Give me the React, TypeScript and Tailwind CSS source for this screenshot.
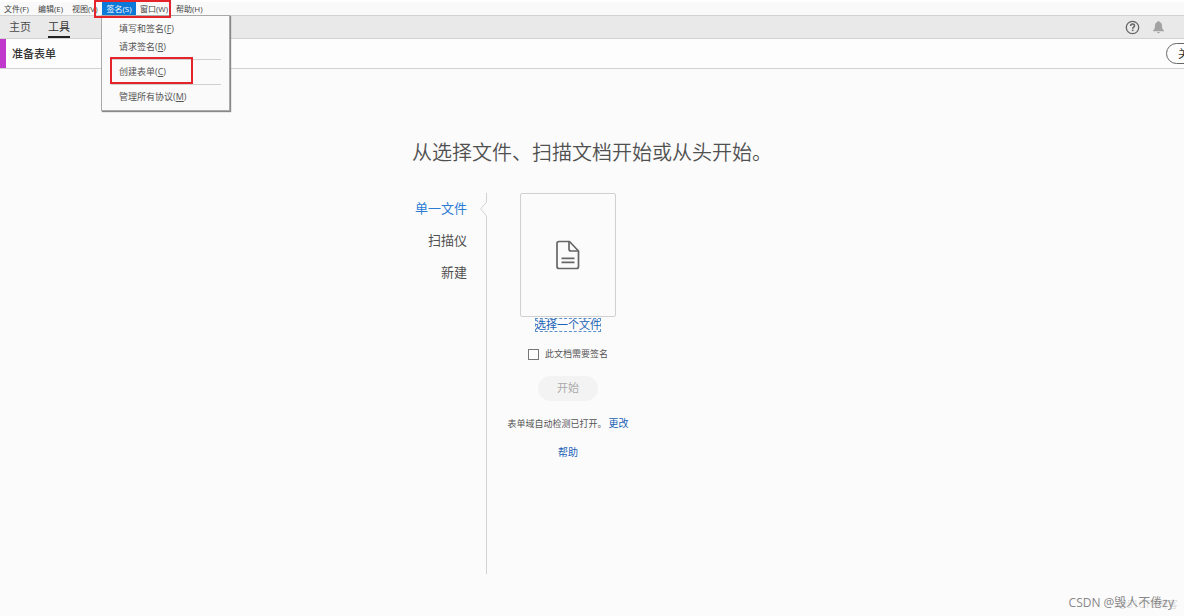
import { useState } from "react"

const menus = [
  { label: "文件", hotkey: "F" },
  { label: "编辑", hotkey: "E" },
  { label: "视图", hotkey: "V" },
  { label: "签名", hotkey: "S" },
  { label: "窗口", hotkey: "W" },
  { label: "帮助", hotkey: "H" },
]

const signItems = [
  [
    { label: "填写和签名", hotkey: "F" },
    { label: "请求签名", hotkey: "R" },
  ],
  [{ label: "创建表单", hotkey: "C" }],
  [{ label: "管理所有协议", hotkey: "M" }],
]

const sources = ["单一文件", "扫描仪", "新建"]

function MenuBar() {
  return (
    <nav className="relative flex h-[15px] items-end bg-[#f9f9f9] border-t-2 border-white text-[8px] leading-[12px] text-[#444]">
      {menus.map((menu) => (
        <button
          key={menu.label}
          className={`h-[13px] shrink-0 px-1 whitespace-nowrap ${
            menu.label === "签名" ? "w-[34px] bg-[#0c78d7] text-white" : "w-[34px] text-left"
          } ${menu.label === "窗口" ? "mr-[2px]" : ""}`}
        >
          {menu.label}({menu.hotkey})
        </button>
      ))}
      {/* Highlight around the open menu */}
      <div className="absolute -top-0.5 left-[94px] z-30 h-[18px] w-[77px] border-2 border-[#e5232b] pointer-events-none" />
      <SignMenu />
    </nav>
  )
}

function SignMenu() {
  return (
    <div className="absolute top-[13px] left-[101px] z-20 w-[129px] border border-[#aaa] bg-[#fafafa] py-1 pr-2 pl-[9px] shadow-[1px_1px_1px_#888]">
      {signItems.map((group, index) => (
        <div key={index} className={index > 0 ? "mt-[3px] border-t border-[#d0d0d0] pt-[3px]" : ""}>
          {group.map((item) => (
            <button
              key={item.label}
              className="block h-[18px] w-full pl-2 text-left text-[9px] leading-[18px] whitespace-nowrap text-[#555]"
            >
              {item.label}(<u className="underline-offset-1">{item.hotkey}</u>)
            </button>
          ))}
        </div>
      ))}
      {/* Highlight around the form entry */}
      <div className="absolute top-[41px] left-2 h-[27px] w-[83px] border-2 border-[#e5232b] pointer-events-none" />
    </div>
  )
}

function TabBar() {
  return (
    <div className="flex h-6 items-stretch border-y border-[#d2d2d2] bg-[#e9e9e9] pl-[9px] text-[11px] text-[#4b4b4b]">
      <button className="mr-[17px]">主页</button>
      <button className="border-b-2 border-[#222] pt-[2px] text-[#333]">工具</button>
      <div className="ml-auto flex items-center gap-3 pr-[19px]">
        <button aria-label="帮助">
          <svg width="15" height="15" viewBox="0 0 15 15" fill="none" stroke="#666">
            <circle cx="7.5" cy="7.5" r="6.2" strokeWidth="1.3" />
            <path d="M5.7 6c0-1.200.8-1.900 1.900-1.900s1.900.7 1.900 1.700c0 1.300-1.800 1.400-1.800 2.900" strokeWidth="1.5" />
            <path d="M7.7 9.600v1.500" strokeWidth="1.6" />
          </svg>
        </button>
        <button aria-label="通知">
          <svg width="13" height="14" viewBox="0 0 13 14" fill="#a3a3a3">
            <path d="M6.5 1c.6 0 1 .4 1 1 1.7.5 2.5 1.8 2.5 3.5 0 2.7.5 3.7 1.9 4.8v.9H1.1v-.9C2.5 9.200 3 8.200 3 5.500 3 3.800 3.800 2.500 5.500 2c0-.6.4-1 1-1z" />
            <path d="M5.100 12h2.800c-.2.8-.7 1.200-1.400 1.200S5.300 12.800 5.100 12z" />
          </svg>
        </button>
      </div>
    </div>
  )
}

function ToolHeader() {
  return (
    <header className="flex h-[30px] items-center border-b border-[#d2d2d2] bg-[#fdfdfd]">
      <div className="h-full w-[6px] bg-[#c038cc]" />
      <h1 className="ml-[6px] pt-[2px] text-[11px] font-medium text-[#333]">准备表单</h1>
      <button className="-mr-7 ml-auto h-[21px] w-[46px] shrink-0 rounded-full border border-[#666] text-[11px] leading-[19px] text-[#333]">
        关闭
      </button>
    </header>
  )
}

function Divider() {
  return (
    <div className="flex w-[7px] shrink-0 flex-col items-end">
      <div className="h-2 w-px bg-[#d2d2d2]" />
      <svg width="7" height="16" viewBox="0 0 7 16" fill="none" stroke="#d2d2d2">
        <path d="M6.500 0v1L.7 8l5.800 7v1" />
      </svg>
      <div className="w-px flex-1 bg-[#d2d2d2]" />
    </div>
  )
}

function FilePanel() {
  const [needsSignature, setNeedsSignature] = useState(false)

  return (
    <section className="flex w-[162px] flex-col items-center">
      <button
        aria-label="选择一个文件"
        className="flex h-[124px] w-24 items-center justify-center rounded-xs border border-[#d0d0d0]"
      >
        <svg width="24" height="30" viewBox="0 0 24 30" fill="none" stroke="#666" strokeWidth="1.700" strokeLinejoin="round">
          <path d="M3 1.500h10.500l9 9.500v15.500a2 2 0 0 1-2 2H3a2 2 0 0 1-2-2v-23a2 2 0 0 1 2-2z" />
          <path d="M13 1.500v7.500a2 2 0 0 0 2 2h7.500" />
          <path d="M5.500 18.300h13M5.500 22.300h13" />
        </svg>
      </button>
      <a
        href="#file"
        className="mt-px h-[14px] outline-1 -outline-offset-1 outline-dashed outline-[#5b8fc7] text-[11px] leading-[14px] text-[#1a62b5]"
      >
        选择一个文件
      </a>
      <label className="mt-[14px] flex h-4 items-center gap-[6px] text-[9px] text-[#555]">
        <input
          type="checkbox"
          checked={needsSignature}
          onChange={(e) => setNeedsSignature(e.target.checked)}
          className="size-[11px] appearance-none border border-[#777] bg-white checked:bg-[#1a62b5]"
        />
        此文档需要签名
      </label>
      <button disabled className="mt-[14px] h-[25px] w-[60px] rounded-full bg-[#f3f3f3] text-[11px] text-[#aaa]">
        开始
      </button>
      <p className="mt-[14px] h-4 text-[9px] leading-4 whitespace-nowrap text-[#555]">
        表单域自动检测已打开。
        <a href="#change" className="ml-[2px] text-[10px] text-[#1a62b5]">
          更改
        </a>
      </p>
      <a href="#help" className="mt-[13px] text-[10px] leading-4 text-[#1a62b5]">
        帮助
      </a>
    </section>
  )
}

export default function App() {
  const [source, setSource] = useState("单一文件")

  return (
    <div className="relative flex min-h-screen flex-col overflow-hidden bg-[#fbfbfb] font-['Open_Sans','Noto_Sans_CJK_SC',sans-serif]">
      <MenuBar />
      <TabBar />
      <ToolHeader />

      <main className="flex flex-1 flex-col items-center pt-[68px] pb-[42px]">
        <h2 className="text-xl leading-8 font-[350] text-[#505050]">从选择文件、扫描文档开始或从头开始。</h2>
        <div className="mt-6 flex w-[360px] flex-1">
          <ul className="flex w-[55px] shrink-0 flex-col items-end gap-3 pt-[5px] text-[13px] leading-5 whitespace-nowrap">
            {sources.map((name) => (
              <li key={name}>
                <button
                  onClick={() => setSource(name)}
                  className={name === source ? "text-[#2b7cd3]" : "text-[#505050]"}
                >
                  {name}
                </button>
              </li>
            ))}
          </ul>
          <div className="ml-[13px] flex">
            <Divider />
          </div>
          <FilePanel />
        </div>
      </main>

      {/* Watermarks */}
      <div className="absolute right-[6px] bottom-1 text-[10px] leading-4 text-[#ddd]">@51CTO博客</div>
      <div className="absolute right-[10px] bottom-[3px] text-xs leading-5 text-[#888]">CSDN @毁人不倦zy</div>
    </div>
  )
}
